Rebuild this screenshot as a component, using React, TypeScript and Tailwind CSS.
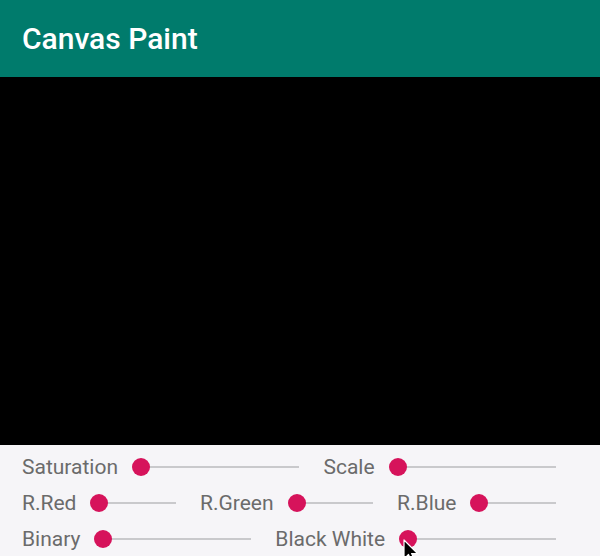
import React from 'react';

type SliderProps = { last?: boolean };

const Slider: React.FC<SliderProps> = ({ last }) => (
  <div className={`relative flex-1 h-[18px] flex items-center ml-[23px] ${last ? '' : 'mr-[24px]'}`}>
    <div className="w-full h-[2px] bg-[#c9c9cc]" />
    <div className="absolute left-[-9px] top-0 w-[18px] h-[18px] rounded-full bg-[#d6135b]" />
  </div>
);

const Label: React.FC<{ text: string }> = ({ text }) => (
  <span className="text-[21px] leading-none text-[#6b6b6b] whitespace-nowrap">{text}</span>
);

const Row: React.FC<{ items: string[] }> = ({ items }) => (
  <div className="h-[36px] flex items-center pl-[22px] pr-[44px]">
    {items.map((t, i) => (
      <React.Fragment key={t}>
        <Label text={t} />
        <Slider last={i === items.length - 1} />
      </React.Fragment>
    ))}
  </div>
);

export default function App() {
  return (
    <div
      className="relative w-[600px] h-[556px] flex flex-col overflow-hidden bg-[#f6f5f8]"
      style={{ fontFamily: 'Roboto, "Noto Sans", sans-serif' }}
    >
      <header className="h-[77px] flex items-center px-[22px] bg-[#007b6c] shrink-0">
        <h1 className="text-[30px] font-medium leading-none text-white">Canvas Paint</h1>
      </header>

      <div className="h-[368px] bg-black shrink-0" />

      <div className="flex-1 pt-[4px]">
        <Row items={['Saturation', 'Scale']} />
        <Row items={['R.Red', 'R.Green', 'R.Blue']} />
        <Row items={['Binary', 'Black White']} />
      </div>

      {/* mouse pointer */}
      <svg className="absolute left-[403px] top-[539px]" width="18" height="26" viewBox="0 0 18 26">
        <path d="M1 1 L1 20 L5.5 15.5 L9 23 L12 21.7 L8.6 14.5 L14.5 14.5 Z" fill="#000" stroke="#fff" strokeWidth="1.2" strokeLinejoin="round" />
      </svg>
    </div>
  );
}
